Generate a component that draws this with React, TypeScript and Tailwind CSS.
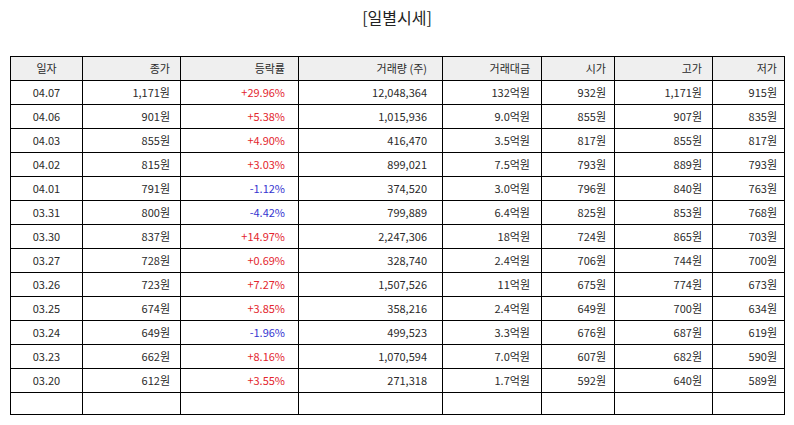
import React from "react";

type Row = [string, string, string, string, string, string, string, string];

const rows: Row[] = [
  ["04.07", "1,171원", "+29.96%", "12,048,364", "132억원", "932원", "1,171원", "915원"],
  ["04.06", "901원", "+5.38%", "1,015,936", "9.0억원", "855원", "907원", "835원"],
  ["04.03", "855원", "+4.90%", "416,470", "3.5억원", "817원", "855원", "817원"],
  ["04.02", "815원", "+3.03%", "899,021", "7.5억원", "793원", "889원", "793원"],
  ["04.01", "791원", "-1.12%", "374,520", "3.0억원", "796원", "840원", "763원"],
  ["03.31", "800원", "-4.42%", "799,889", "6.4억원", "825원", "853원", "768원"],
  ["03.30", "837원", "+14.97%", "2,247,306", "18억원", "724원", "865원", "703원"],
  ["03.27", "728원", "+0.69%", "328,740", "2.4억원", "706원", "744원", "700원"],
  ["03.26", "723원", "+7.27%", "1,507,526", "11억원", "675원", "774원", "673원"],
  ["03.25", "674원", "+3.85%", "358,216", "2.4억원", "649원", "700원", "634원"],
  ["03.24", "649원", "-1.96%", "499,523", "3.3억원", "676원", "687원", "619원"],
  ["03.23", "662원", "+8.16%", "1,070,594", "7.0억원", "607원", "682원", "590원"],
  ["03.20", "612원", "+3.55%", "271,318", "1.7억원", "592원", "640원", "589원"],
];

const headers = ["일자", "종가", "등락률", "거래량 (주)", "거래대금", "시가", "고가", "저가"];
const widths = ["w-[72px]", "w-[98px]", "w-[118px]", "w-[144px]", "w-[99px]", "w-[73px]", "w-[98px]", "w-[72px]"];
const pads = ["", "pr-[10px]", "pr-[13px]", "pr-[15px]", "pr-[11px]", "pr-[8px]", "pr-[10px]", "pr-[7px]"];

export default function App() {
  return (
    <div
      className="w-[794px] h-[425px] bg-white text-[#2a2a2a]"
      style={{ fontFamily: '"Noto Sans CJK KR", "Noto Sans", sans-serif' }}
    >
      <div className="h-[36px] pt-[4px] text-center text-[16px] leading-[26px] text-[#222]">[일별시세]</div>
      <div className="pl-[10px] pt-[20px]">
        <table className="border-collapse text-[11px] table-fixed w-[775px]">
          <colgroup>
            {widths.map((w, i) => (
              <col key={i} className={w} />
            ))}
          </colgroup>
          <thead>
            <tr className="h-[24px] bg-[#efefef]">
              {headers.map((h, i) => (
                <th
                  key={i}
                  className={`border border-black font-normal p-0 leading-none ${i === 0 ? "text-center" : "text-right " + pads[i]}`}
                >
                  {h}
                </th>
              ))}
            </tr>
          </thead>
          <tbody>
            {rows.map((r, ri) => (
              <tr key={ri} className="h-[24px]">
                {r.map((c, i) => {
                  let color = "";
                  if (i === 2) color = c.startsWith("-") ? "text-[#3535d0]" : "text-[#e3262e]";
                  return (
                    <td
                      key={i}
                      className={`border border-black p-0 leading-none ${i === 0 ? "text-center" : "text-right " + pads[i]} ${color}`}
                    >
                      {c}
                    </td>
                  );
                })}
              </tr>
            ))}
            <tr className="h-[22px]">
              {headers.map((_, i) => (
                <td key={i} className="border border-black p-0"></td>
              ))}
            </tr>
          </tbody>
        </table>
      </div>
    </div>
  );
}
